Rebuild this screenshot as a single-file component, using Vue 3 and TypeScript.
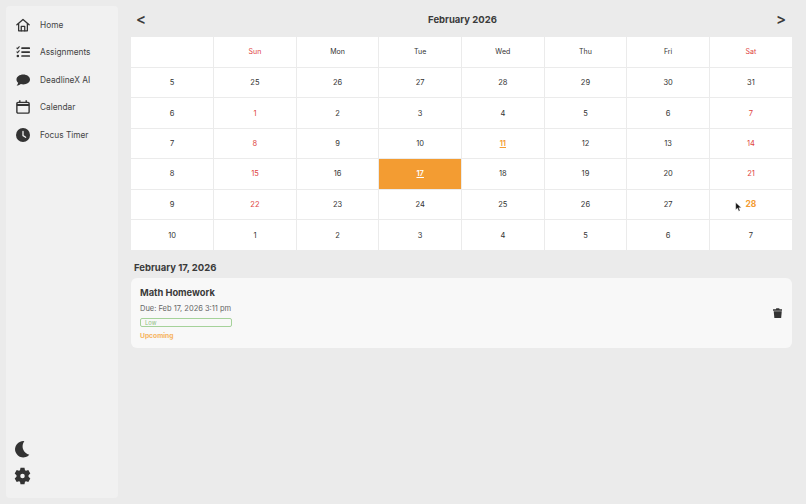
<script setup lang="ts">
const navItems = [
  { label: 'Home', icon: 'home' },
  { label: 'Assignments', icon: 'tasks' },
  { label: 'DeadlineX AI', icon: 'chat' },
  { label: 'Calendar', icon: 'calendar' },
  { label: 'Focus Timer', icon: 'clock' },
]

const weekDays = ['Sun', 'Mon', 'Tue', 'Wed', 'Thu', 'Fri', 'Sat']

const weeks = [
  { no: 5, days: [25, 26, 27, 28, 29, 30, 31], outside: true },
  { no: 6, days: [1, 2, 3, 4, 5, 6, 7], outside: false },
  { no: 7, days: [8, 9, 10, 11, 12, 13, 14], outside: false },
  { no: 8, days: [15, 16, 17, 18, 19, 20, 21], outside: false },
  { no: 9, days: [22, 23, 24, 25, 26, 27, 28], outside: false },
  { no: 10, days: [1, 2, 3, 4, 5, 6, 7], outside: true },
]

function dayClass(week: { days: number[]; outside: boolean }, index: number) {
  const day = week.days[index]
  if (week.outside) return ''
  if (day === 17) return 'selected'
  if (day === 11) return 'marked'
  if (day === 28) return 'today'
  if (index === 0 || index === 6) return 'weekend'
  return ''
}
</script>

<template>
  <div class="app-shell">
    <aside class="sidebar">
      <nav class="nav-list">
        <div v-for="item in navItems" :key="item.label" class="nav-item">
          <svg class="nav-icon" viewBox="0 0 24 24">
            <g v-if="item.icon === 'home'" fill="none" stroke="#333" stroke-width="2.2" stroke-linejoin="round" stroke-linecap="round">
              <path d="M1.5 11.5 12 2.500l10.500 9" />
              <path d="M4.500 9.500V22h15V9.500" />
              <path d="M9 22v-7.500h6V22" />
            </g>
            <g v-else-if="item.icon === 'tasks'" fill="#333">
              <rect x="9" y="4" width="15" height="2.800" rx="1" />
              <rect x="9" y="10.800" width="15" height="2.800" rx="1" />
              <rect x="9" y="17.500" width="15" height="2.800" rx="1" />
              <path d="M1 4.700 2.800 6.300 6 2.500" fill="none" stroke="#333" stroke-width="1.800" />
              <path d="M1 11.500 2.800 13.100 6 9.300" fill="none" stroke="#333" stroke-width="1.800" />
              <circle cx="3.200" cy="18.900" r="2.200" />
            </g>
            <path v-else-if="item.icon === 'chat'" fill="#333" d="M12.500 2.500C18.900 2.500 24 6.300 24 11s-5.100 8.500-11.500 8.500c-1.500 0-2.900-.2-4.200-.6C6.800 20.300 4.300 21.500 1 21.500c1.500-1.400 2.500-3 2.800-4.600C1.900 15.300.800 13.300.800 11 .800 6.300 6.100 2.500 12.500 2.500z" />
            <g v-else-if="item.icon === 'calendar'" fill="none" stroke="#333" stroke-width="2.400">
              <rect x="1.500" y="4" width="21" height="18.500" rx="2" />
              <path d="M1.500 8.500h21" stroke-width="3.500" />
              <path d="M6.500 .500v4.500M17.500 .500v4.500" />
            </g>
            <g v-else>
              <circle cx="12" cy="12" r="12" fill="#333" />
              <path d="M12 6v7l4.500 3" fill="none" stroke="#f1f1f1" stroke-width="2.200" stroke-linecap="round" />
            </g>
          </svg>
          <span class="nav-label">{{ item.label }}</span>
        </div>
      </nav>
      <div class="sidebar-bottom">
        <svg class="moon" viewBox="0 0 24 24">
          <path fill="#333" d="M16 1A11.500 11.500 0 1 0 23 20A12 12 0 0 1 16 1z" />
        </svg>
        <svg class="gear" viewBox="0 0 24 24">
          <path fill="#333" fill-rule="evenodd" d="M9.200 .500h5.600l.7 3.300 1.500.9 3.200-1 2.800 4.800-2.500 2.300v2.400l2.500 2.300-2.800 4.800-3.200-1-1.500.9-.7 3.300H9.200l-.7-3.300-1.500-.9-3.200 1-2.800-4.800 2.500-2.300v-2.400L1 8.500l2.800-4.800 3.200 1 1.500-.9zM12 8.800a3.200 3.200 0 1 0 0 6.400 3.200 3.200 0 0 0 0-6.400z" />
        </svg>
      </div>
    </aside>

    <main class="main">
      <header class="month-bar">
        <span class="month-arrow">&lt;</span>
        <h1 class="month-title">February 2026</h1>
        <span class="month-arrow">&gt;</span>
      </header>

      <table class="calendar">
        <thead>
          <tr>
            <th></th>
            <th
              v-for="(day, i) in weekDays"
              :key="day"
              :class="{ weekend: i === 0 || i === 6 }"
            >
              {{ day }}
            </th>
          </tr>
        </thead>
        <tbody>
          <tr v-for="week in weeks" :key="week.no">
            <td>{{ week.no }}</td>
            <td
              v-for="(day, i) in week.days"
              :key="i"
              :class="dayClass(week, i)"
            >
              {{ day }}
              <svg v-if="dayClass(week, i) === 'today'" class="cursor" viewBox="0 0 12 18">
                <path fill="#111" stroke="#fff" stroke-width="0.700" d="M1 1v13l3.200-3 2.300 5.500 2.300-1-2.300-5.200h4.500z" />
              </svg>
            </td>
          </tr>
        </tbody>
      </table>

      <h2 class="selected-date">February 17, 2026</h2>

      <section class="task-card">
        <div class="task-info">
          <h3 class="task-title">Math Homework</h3>
          <p class="task-due">Due: Feb 17, 2026 3:11 pm</p>
          <div class="priority">Low</div>
          <p class="task-status">Upcoming</p>
        </div>
        <svg class="trash" viewBox="2 1 20 22">
          <path fill="#333" d="M9 1.500h6l1 2h6v3H2v-3h6zM3.500 8h17l-1.400 14.500H4.900z" />
        </svg>
      </section>
    </main>
  </div>
</template>

<style scoped>
.app-shell {
  display: flex;
  width: 806px;
  height: 504px;
  box-sizing: border-box;
  padding: 6px 14px 6px 6px;
  gap: 13px;
  background: #ebebeb;
  font-family: Inter, "Liberation Sans", sans-serif;
  color: #3a3a3a;
  overflow: hidden;
}

.sidebar {
  flex: 0 0 112px;
  display: flex;
  flex-direction: column;
  justify-content: space-between;
  background: #f1f1f1;
  border-radius: 4px;
  padding: 8.500px 0 13px 10px;
  box-sizing: border-box;
}

.nav-list {
  display: flex;
  flex-direction: column;
  gap: 7.500px;
}

.nav-item {
  display: flex;
  align-items: center;
  gap: 10px;
  height: 20px;
}

.nav-icon {
  width: 14px;
  height: 14px;
}

.nav-label {
  font-size: 8.300px;
  color: #444;
}

.sidebar-bottom {
  display: flex;
  flex-direction: column;
  gap: 9px;
}

.moon {
  width: 17px;
  height: 18px;
  margin-left: -3px;
}

.gear {
  width: 17px;
  height: 18px;
  margin-left: -2px;
}

.main {
  flex: 1;
  min-width: 0;
  display: flex;
  flex-direction: column;
}

.month-bar {
  display: flex;
  justify-content: space-between;
  align-items: center;
  height: 26px;
  margin-bottom: 5px;
  padding: 0 6px 1px 5px;
  box-sizing: border-box;
}

.month-arrow {
  font-size: 15px;
  font-weight: 600;
  line-height: 22px;
}

.month-title {
  margin: 2px 0 0 3px;
  font-size: 9.500px;
  font-weight: 700;
}

.calendar {
  width: 661px;
  height: 213px;
  border-collapse: collapse;
  table-layout: fixed;
  background: #fff;
  font-size: 7.500px;
  color: #333;
}

.calendar tr {
  height: 30.400px;
}

.calendar th,
.calendar td {
  border-left: 1px solid #ebebeb;
  border-top: 1px solid #ebebeb;
  text-align: center;
  font-weight: 400;
  padding: 0;
  position: relative;
}

.calendar th {
  font-size: 7px;
}

.calendar tr:first-child th {
  border-top: none;
}

.calendar th:first-child,
.calendar td:first-child {
  border-left: none;
}

.calendar .weekend {
  color: #e0443e;
}

.calendar .marked {
  color: #f39c32;
  font-weight: 600;
  text-decoration: underline;
}

.calendar .today {
  color: #f39c32;
  font-weight: 700;
  font-size: 8.500px;
}

.calendar .selected {
  background: #f39c32;
  color: #fff;
  font-weight: 600;
  text-decoration: underline;
}

.cursor {
  position: absolute;
  left: 25.500px;
  top: 12px;
  width: 7px;
  height: 10px;
}

.selected-date {
  margin: 11px 0 0 3px;
  font-size: 9.500px;
  font-weight: 700;
  line-height: 13px;
}

.task-card {
  display: flex;
  justify-content: space-between;
  align-items: center;
  width: 661px;
  height: 70px;
  margin-top: 4px;
  padding: 0 10px 0 9px;
  box-sizing: border-box;
  background: #f8f8f8;
  border-radius: 6px;
}

.task-info {
  width: 92px;
  align-self: flex-start;
  padding-top: 9px;
}

.task-title {
  margin: 0;
  font-size: 9.300px;
  font-weight: 700;
  line-height: 12px;
}

.task-due {
  margin: 4.500px 0 0;
  font-size: 7.500px;
  line-height: 10px;
  color: #666;
  white-space: nowrap;
}

.priority {
  margin-top: 4.500px;
  height: 7px;
  border: 1px solid #a5d29a;
  border-radius: 2px;
  padding-left: 4px;
  font-size: 5.800px;
  line-height: 7px;
  color: #8cc07f;
}

.task-status {
  margin: 5px 0 0;
  font-size: 6.700px;
  line-height: 8px;
  font-weight: 700;
  color: #f6b35c;
}

.trash {
  width: 9.500px;
  height: 10.500px;
}
</style>

<style>
html,
body {
  margin: 0;
  background: #ebebeb;
}
</style>
